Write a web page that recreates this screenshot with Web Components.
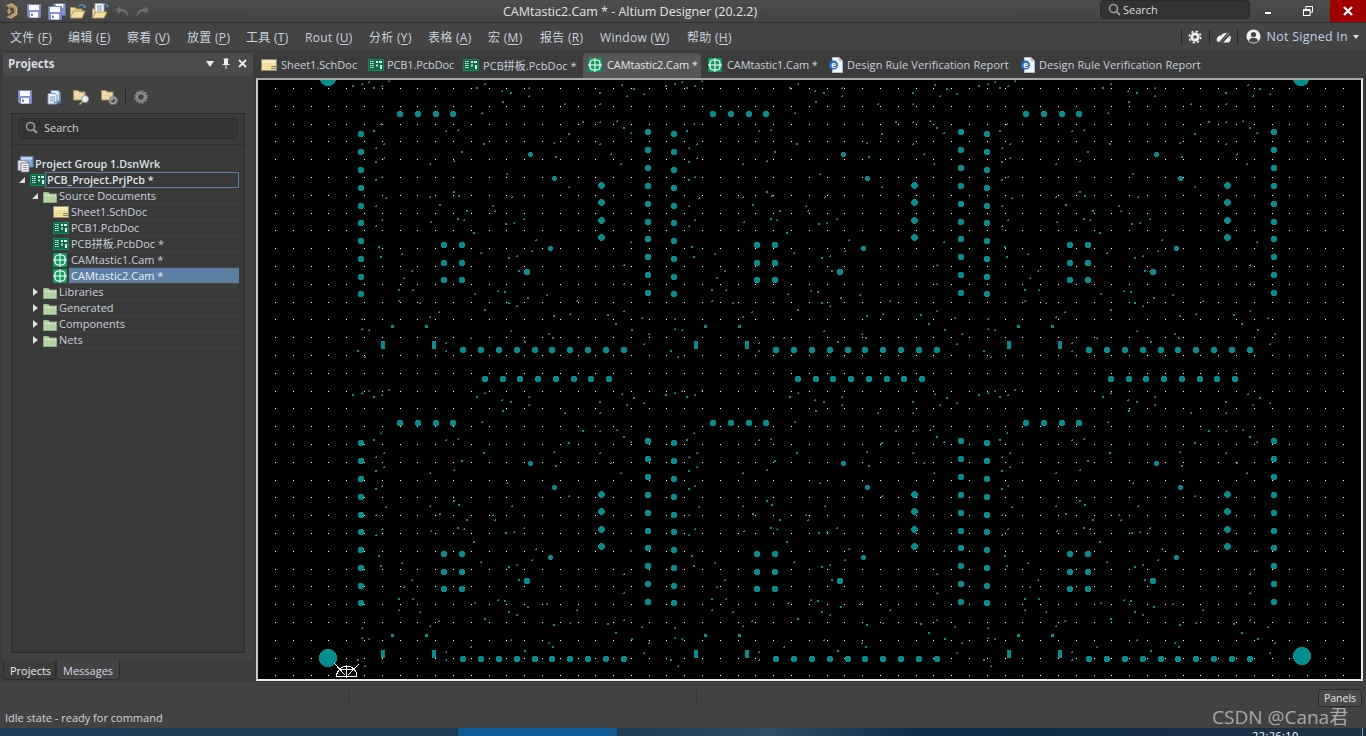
<!DOCTYPE html>
<html><head><meta charset="utf-8"><title>Altium Designer</title>
<style>
html,body{margin:0;padding:0;background:#424242;overflow:hidden}
body{font-family:"Open Sans","Noto Sans CJK SC",sans-serif;font-size:11px;color:#d8d8d8}
</style></head><body>
<ad-app>
  <ad-titlebar title-text="CAMtastic2.Cam * - Altium Designer (20.2.2)"></ad-titlebar>
  <ad-menubar>
    <ad-menu-item label="文件" key="F" w="58"></ad-menu-item>
    <ad-menu-item label="编辑" key="E" w="59"></ad-menu-item>
    <ad-menu-item label="察看" key="V" w="60"></ad-menu-item>
    <ad-menu-item label="放置" key="P" w="59"></ad-menu-item>
    <ad-menu-item label="工具" key="T" w="59"></ad-menu-item>
    <ad-menu-item label="Rout" key="U" w="64"></ad-menu-item>
    <ad-menu-item label="分析" key="Y" w="59"></ad-menu-item>
    <ad-menu-item label="表格" key="A" w="60"></ad-menu-item>
    <ad-menu-item label="宏" key="M" w="52"></ad-menu-item>
    <ad-menu-item label="报告" key="R" w="60"></ad-menu-item>
    <ad-menu-item label="Window" key="W" w="87"></ad-menu-item>
    <ad-menu-item label="帮助" key="H" w="60"></ad-menu-item>
  </ad-menubar>
  <ad-workspace>
    <ad-sidebar slot="side">
      <ad-tree-row pad="5" icon="group" bold>Project Group 1.DsnWrk</ad-tree-row>
      <ad-tree-row pad="5" arrow="open" icon="pcb" bold focus>PCB_Project.PrjPcb *</ad-tree-row>
      <ad-tree-row pad="18" arrow="open" icon="folder">Source Documents</ad-tree-row>
      <ad-tree-row pad="41" icon="sch">Sheet1.SchDoc</ad-tree-row>
      <ad-tree-row pad="41" icon="pcb">PCB1.PcbDoc</ad-tree-row>
      <ad-tree-row pad="41" icon="pcb">PCB拼板.PcbDoc *</ad-tree-row>
      <ad-tree-row pad="41" icon="cam">CAMtastic1.Cam *</ad-tree-row>
      <ad-tree-row pad="41" icon="cam" selected>CAMtastic2.Cam *</ad-tree-row>
      <ad-tree-row pad="18" arrow="closed" icon="folder">Libraries</ad-tree-row>
      <ad-tree-row pad="18" arrow="closed" icon="folder">Generated</ad-tree-row>
      <ad-tree-row pad="18" arrow="closed" icon="folder">Components</ad-tree-row>
      <ad-tree-row pad="18" arrow="closed" icon="folder">Nets</ad-tree-row>
    </ad-sidebar>
    <ad-document slot="doc">
      <ad-tab icon="sch" w="107" tx="16" ls="0">Sheet1.SchDoc</ad-tab>
      <ad-tab icon="pcb" w="95" tx="15" ls="-.1">PCB1.PcbDoc</ad-tab>
      <ad-tab icon="pcb" w="125" tx="16" ls=".05">PCB拼板.PcbDoc *</ad-tab>
      <ad-tab icon="cam" w="118" tx="15" ls="-.1" active>CAMtastic2.Cam *</ad-tab>
      <ad-tab icon="cam" w="120" tx="15" ls="-.1" style="margin-left:2px">CAMtastic1.Cam *</ad-tab>
      <ad-tab icon="report" w="192" tx="15" ls=".1">Design Rule Verification Report</ad-tab>
      <ad-tab icon="report" w="191" tx="15" ls=".1">Design Rule Verification Report</ad-tab>
    </ad-document>
  </ad-workspace>
  <ad-statusbar></ad-statusbar>
  <ad-taskbar></ad-taskbar>
  <ad-watermark>CSDN @Cana君</ad-watermark>
</ad-app>
<script>
const ICONS={
 logo:'<path d="M4 3 10 1 15.500 5 15.500 12.500 9 17 4 15 9 12.500 12 10.500 12 7 8.500 5 8 8 10 9.500 6.500 12.500 5 9 7 6Z" fill="#b39460"/><path d="M6 3.500 10 2.400 14.500 6 14.500 12 9 16" fill="none" stroke="#cfb07a" stroke-width="1"/>',
 save:'<path d="M.5.5H13.5V13.5H2L.5 12Z" fill="#8592cf" stroke="#7884c4"/><rect x="2" y="1" width="10" height="5" fill="#fbfbff"/><rect x="3" y="8" width="8" height="5.5" fill="#fff"/><rect x="4" y="9.5" width="2" height="2.5" fill="#7884c4"/>',
 saveall:'<g transform="translate(5 0) scale(.93)"><path d="M.5.5H13.5V13.5H.5Z" fill="#8592cf"/><rect x="3" y="1" width="8" height="4" fill="#fff"/></g><g transform="translate(0 3)"><path d="M.5.5H13.5V13.5H.5Z" fill="#8592cf" stroke="#6f7bbd"/><rect x="2" y="1" width="10" height="5" fill="#fff"/><rect x="3" y="8" width="8" height="5.5" fill="#fff"/><rect x="4" y="9.5" width="2" height="2.5" fill="#7884c4"/></g>',
 open:'<path d="M.5 15V4.5H5L6.5 6H12V8" fill="#eed8a0" stroke="#b59a5a"/><path d="M.5 15 3.5 8H15L12 15Z" fill="#f4dfa6" stroke="#b59a5a"/><path d="M9 3.5C10.5 1 13 1 14.5 3.5" fill="none" stroke="#5d8fc4" stroke-width="1.4"/><path d="M16 2 15.5 5.5 12.5 4Z" fill="#5d8fc4"/>',
 opendoc:'<path d="M.5 15V6H4V14" fill="#eed8a0" stroke="#b59a5a"/><path d="M3 .5H12V11H3Z" fill="#fff" stroke="#8c9fc4"/><path d="M5 3H10M5 5H10M5 7H10" stroke="#5f86bd"/><path d="M.5 15 3.5 9H15L12 15Z" fill="#f4dfa6" stroke="#b59a5a"/><path d="M11 1.5C12.5.5 14 1 15 2.5" fill="none" stroke="#5d8fc4" stroke-width="1.3"/><path d="M16.5 1.5 16 4.8 13.5 3.5Z" fill="#5d8fc4"/>',
 undo:'<path d="M5 2 1 6 5 10V7.5C9 7 12 9 13 13 14 8 11 4.500 5 4.500Z" fill="#6d6d6d"/>',
 redo:'<path d="M9 2 13 6 9 10V7.5C5 7 2 9 1 13 0 8 3 4.500 9 4.500Z" fill="#6d6d6d"/>',
 docs:'<path d="M5 .5H12L14 2.500V11H5Z" fill="#dfe9f6" stroke="#6f97c6"/><path d="M2 3.500H9L11 5.500V14H2Z" fill="#eef3fb" stroke="#6f97c6"/><path d="M4 7H9M4 9H9M4 11H9" stroke="#7a9cc8"/><path d="M14 3V12.500H8" fill="none" stroke="#5b8ac0" stroke-width="1.4"/>',
 foldersearch:'<path d="M.5 11V1.500H5L6.500 3H12V11Z" fill="#ecd9a4" stroke="#a8905a"/><circle cx="12" cy="10" r="3.500" fill="#e8eef5" stroke="#9a9a9a"/><path d="M9.300 12.700 6.500 15.500" stroke="#c7a860" stroke-width="1.600"/>',
 foldergear:'<path d="M.5 11V1.500H5L6.500 3H12V11Z" fill="#ecd9a4" stroke="#a8905a"/><circle cx="12" cy="11.500" r="3" fill="none" stroke="#9a9a9a" stroke-width="2"/><circle cx="12" cy="11.500" r="4.500" fill="none" stroke="#8a8a8a" stroke-width="1" stroke-dasharray="1.500 1.300"/>',
 gear:'<circle cx="7" cy="7" r="4" fill="none" stroke="#8a8a8a" stroke-width="2.600"/><circle cx="7" cy="7" r="6" fill="none" stroke="#8a8a8a" stroke-width="1.600" stroke-dasharray="2 1.140"/>',
 search:'<circle cx="5.500" cy="5.500" r="4" fill="none" stroke="#9a9a9a" stroke-width="1.600"/><path d="M8.500 8.500 12 12" stroke="#9a9a9a" stroke-width="2"/>',
 wgear:'<circle cx="7" cy="7" r="3.200" fill="none" stroke="#eee" stroke-width="2.800"/><circle cx="7" cy="7" r="5.700" fill="none" stroke="#eee" stroke-width="1.800" stroke-dasharray="2.200 2.270"/>',
 nocloud:'<path d="M1 11C0 8 2 5.500 5 5.500 7 2.500 11 2 13 3.500L5 12H2.500Z" fill="#eee"/><path d="M7 12.500 14 5.500C15 7 15 9.500 14 11.500L12.500 12.500Z" fill="#eee"/><path d="M13.500 1 3 13.500" stroke="#444" stroke-width="1.300"/>',
 user:'<circle cx="7.500" cy="7.500" r="7" fill="#eee"/><circle cx="7.500" cy="5.500" r="2.600" fill="#444"/><path d="M2.800 12C3.500 9.500 5.500 8.800 7.500 8.800S11.500 9.500 12.200 12C10 14.300 5 14.300 2.800 12Z" fill="#444"/>',
 sch:'<rect x=".5" y="1.500" width="15" height="11" fill="#f2de9c" stroke="#8d8d7a"/><rect x="1" y="2" width="14" height="3" fill="#f8eab8"/><path d="M10 8.500H15M10 10.500H15" stroke="#8d7f54"/>',
 pcb:'<rect x=".5" y="1.500" width="15" height="11" fill="#0a6b46" stroke="#16875b"/><path d="M2 3.500H6M2 5.500H6M2 7.500H6M2 9.500H6" stroke="#e7f3ee" stroke-dasharray="1.500 .6"/><rect x="8" y="3" width="2" height="2" fill="#e7f3ee"/><rect x="11" y="3" width="3" height="2" fill="#e7f3ee"/><rect x="8" y="6.500" width="2" height="2" fill="#cfe9de"/><rect x="12" y="7" width="2" height="4" fill="#e7f3ee"/>',
 cam:'<rect x="0" y="1" width="14" height="14" rx="1" fill="#0d9a5e"/><rect x="2" y="3" width="10" height="10" rx="3.500" fill="none" stroke="#fff" stroke-width="1.200"/><path d="M7 1V15M0 8H14" stroke="#fff" stroke-width="1"/>',
 report:'<path d="M4.500.5H11L14.500 4V15.500H4.500Z" fill="#f2f5fa" stroke="#b5bfd0"/><path d="M11 .5V4H14.500" fill="#cfd8e6" stroke="#b5bfd0"/><circle cx="5.500" cy="8" r="4.500" fill="#1f6fd0"/><text x="5.500" y="10.800" font-size="8" font-weight="700" font-family="Open Sans" text-anchor="middle" fill="#fff">e</text>',
 folder:'<path d="M.5 12.500V2.500H5.500L7 4H13.500V12.500Z" fill="#b4d3a3" stroke="#8faf80"/><rect x="1" y="5" width="12" height="1" fill="#d7e8cd"/>',
 group:'<path d="M3.500.5H16V11H3.500Z" fill="#7fa4d8" stroke="#5f86bd"/><rect x="4" y="1.500" width="11" height="2" fill="#cfdff5"/><path d="M1 4.500H9L10.500 6V14.500H1Z" fill="#e6e6ee" stroke="#8d8d9e"/><path d="M4 7H12V16H4Z" fill="#f5f5f8" stroke="#77778c"/><path d="M6 9.500H10M6 11.500H10M6 13.500H10" stroke="#8a8aa0"/>'
};
const VB={logo:[18,18],save:[14,14],saveall:[19,17],open:[17,16],opendoc:[17,16],undo:[14,14],redo:[14,14],docs:[15,15],foldersearch:[16,16],foldergear:[17,16],gear:[14,14],search:[13,13],wgear:[14,14],nocloud:[15,14],user:[15,15],sch:[16,14],pcb:[16,14],cam:[14,16],report:[15,16],folder:[14,13],group:[17,17]};
class AdIcon extends HTMLElement{connectedCallback(){
  const n=this.getAttribute('name'),[w,h]=VB[n];
  this.attachShadow({mode:'open'}).innerHTML=`<style>:host{display:inline-flex;flex:none;width:${w}px;height:${h}px}svg{display:block}</style><svg width="${w}" height="${h}" viewBox="0 0 ${w} ${h}">${ICONS[n]}</svg>`;
}}
customElements.define('ad-icon',AdIcon);

class AdApp extends HTMLElement{constructor(){super();this.attachShadow({mode:'open'}).innerHTML=`<style>:host{display:flex;flex-direction:column;width:1366px;height:736px;overflow:hidden;position:relative;font-family:"Open Sans","Noto Sans CJK SC",sans-serif;font-size:11px;color:#d8d8d8}</style><slot></slot>`}}
customElements.define('ad-app',AdApp);

class AdTitlebar extends HTMLElement{connectedCallback(){
  this.attachShadow({mode:'open'}).innerHTML=`<style>
  :host{display:flex;height:22px;flex:none;align-items:flex-start;background:linear-gradient(#4c4c4c,#444);border-bottom:1px solid #2e2e2e}
  .q{display:flex;align-items:center;height:22px;width:503px;flex:none;padding-left:2px;box-sizing:border-box}
  .t{font-size:12.5px;line-height:23px;color:#e2e2e2;white-space:nowrap;width:597px}
  .s{flex:none;height:19px;border:1px solid #2a2a2a;border-radius:4px;background:#333;display:flex;align-items:center;gap:2px;padding:0 0 1px 7px;box-sizing:border-box;color:#ddd;font-size:11px;width:150px}
  .wb{display:flex;margin-left:auto}
  .w{height:22px;display:flex;align-items:center;justify-content:center}
  svg{display:block}
  </style>
  <div class="q">
   <ad-icon name="logo" style="margin-right:7px"></ad-icon>
   <ad-icon name="save" style="margin-right:7px"></ad-icon>
   <ad-icon name="saveall" style="margin-right:3px"></ad-icon>
   <ad-icon name="open" style="margin-right:5px"></ad-icon>
   <ad-icon name="opendoc" style="margin-right:6px"></ad-icon>
   <ad-icon name="undo" style="margin-right:7px"></ad-icon>
   <ad-icon name="redo"></ad-icon>
  </div>
  <div class="t">${this.getAttribute('title-text')}</div>
  <div class="s"><ad-icon name="search"></ad-icon><span>Search</span></div>
  <div class="wb">
   <div class="w" style="width:36px"><svg width="8" height="8"><rect x="1" y="5" width="6" height="2" fill="#fff"/></svg></div>
   <div class="w" style="width:44px"><svg width="10" height="10"><rect x="3" y=".5" width="6.500" height="5.500" fill="none" stroke="#fff"/><rect x=".5" y="3.500" width="6.500" height="6" fill="#444" stroke="#fff"/><rect x="1" y="3" width="6" height="2" fill="#fff"/></svg></div>
   <div class="w" style="width:36px;background:#a00000"><svg width="10" height="10"><path d="M1 1 9 9M9 1 1 9" stroke="#fff" stroke-width="2.200"/></svg></div>
  </div>`;
}}
customElements.define('ad-titlebar',AdTitlebar);

class AdMenubar extends HTMLElement{connectedCallback(){
  this.attachShadow({mode:'open'}).innerHTML=`<style>
  :host{display:flex;height:27px;flex:none;align-items:center;background:#444;padding-left:10px;font-size:12px;color:#c9d3de}
  .r{margin-left:auto;display:flex;align-items:center;height:27px}
  .sep{width:1px;height:14px;background:#252525}
  .c{width:27px;display:flex;justify-content:center}
  .n{margin-left:6px;font-size:12.5px;color:#bcd0e6;letter-spacing:.25px}
  .car{width:0;height:0;border:3.5px solid transparent;border-top:4px solid #ddd;border-bottom:0;margin:0 7px 0 5px}
  </style><slot></slot><div class="r"><div class="sep"></div><div class="c"><ad-icon name="wgear"></ad-icon></div><div class="sep"></div><div class="c"><ad-icon name="nocloud"></ad-icon></div><div class="sep"></div>
  <ad-icon name="user" style="margin-left:8px"></ad-icon><span class="n">Not Signed In</span><i class="car"></i></div>`;
}}
customElements.define('ad-menubar',AdMenubar);

class AdMenuItem extends HTMLElement{connectedCallback(){
  const g=a=>this.getAttribute(a);
  this.attachShadow({mode:'open'}).innerHTML=`<style>:host{display:block;flex:none;white-space:nowrap;width:${g('w')}px;letter-spacing:.3px;padding-top:1px;box-sizing:border-box}u{text-underline-offset:2px}</style>${g('label')} (<u>${g('key')}</u>)`;
}}
customElements.define('ad-menu-item',AdMenuItem);

class AdWorkspace extends HTMLElement{constructor(){super();this.attachShadow({mode:'open'}).innerHTML=`<style>:host{display:flex;flex:none;height:632px;background:#3c3c3c}</style><slot name="side"></slot><slot name="doc"></slot>`}}
customElements.define('ad-workspace',AdWorkspace);

class AdSidebar extends HTMLElement{connectedCallback(){
  this.attachShadow({mode:'open'}).innerHTML=`<style>
  :host{display:flex;flex-direction:column;width:256px;flex:none;padding:3px 3px 0;box-sizing:border-box;background:#3c3c3c}
  .hd{height:23px;flex:none;box-sizing:border-box;padding:0 0 2px 5px;background:#4b4b4b;display:flex;align-items:center;font-weight:700;font-size:11.5px;color:#d7dde4}
  .hd b{font-weight:700;flex:1}
  .hd svg{display:block}
  .body{height:585px;flex:none;background:#424242;padding:0 8px;display:flex;flex-direction:column}
  .tb{height:37px;flex:none;box-sizing:border-box;padding:5px 0 0 7px;display:flex;align-items:center}
  .vs{width:1px;height:16px;background:#262626;margin:0 8px 0 7px}
  .frame{height:540px;flex:none;border:1px solid #2b2b2b;background:#3a3a3a;padding:4px 6px 0;box-sizing:border-box;display:flex;flex-direction:column}
  .sb{height:21px;flex:none;box-sizing:border-box;border:1px solid #2c2c2c;border-radius:4px;background:#333;display:flex;align-items:center;gap:6px;padding:0 0 2px 6px;color:#d4d4d4}
  .ln{height:1px;flex:none;background:#2f2f2f;margin:5px -6px 0}
  .tree{padding-top:11px;margin:0 -1px 0 -6px}
  .tabs{flex:1;display:flex;align-items:flex-start;background:#3c3c3c}
  .tab{height:19px;box-sizing:border-box;padding:0 6px;display:flex;align-items:center;border:1px solid #2d2d2d;border-top:0;border-radius:0 0 4px 4px;background:#444;color:#cfd8e2}
  .tab.a{background:#3c3c3c;color:#eee;width:53px}
  </style>
  <div class="hd"><b>Projects</b>
   <svg width="12" height="10" style="margin-right:4px"><path d="M1 2H9L5 8Z" fill="#eee"/></svg>
   <svg width="10" height="11" style="margin-right:7px"><path d="M2.500 1H7.500M3.500 1V6H6.500V1M1.500 6.500H8.500M5 6.500V11" stroke="#eee" fill="#eee"/></svg>
   <svg width="9" height="9" style="margin-right:6px"><path d="M1 1 8 8M8 1 1 8" stroke="#eee" stroke-width="1.800"/></svg>
  </div>
  <div class="body">
   <div class="tb"><ad-icon name="save" style="margin-right:14px"></ad-icon><ad-icon name="docs" style="margin-right:12px"></ad-icon><ad-icon name="foldersearch" style="margin-right:12px"></ad-icon><ad-icon name="foldergear"></ad-icon><div class="vs"></div><ad-icon name="gear"></ad-icon></div>
   <div class="frame"><div class="sb"><ad-icon name="search"></ad-icon><span>Search</span></div><div class="ln"></div><div class="tree"><slot></slot></div></div>
  </div>
  <div class="tabs"><div class="tab a">Projects</div><div class="tab">Messages</div></div>`;
}}
customElements.define('ad-sidebar',AdSidebar);

class AdTreeRow extends HTMLElement{connectedCallback(){
  const g=a=>this.getAttribute(a),h=a=>this.hasAttribute(a);
  const ar=g('arrow'),ic=g('icon');
  const arrow=ar=='open'?'<svg width="6" height="6" style="display:block"><path d="M6 0V6H0Z" fill="#ddd"/></svg>':ar=='closed'?'<svg width="5" height="8" style="display:block"><path d="M0 0 5 4 0 8Z" fill="#ddd"/></svg>':'';
  const ml=(ic=='folder'||h('focus'))?1:2, pl=(ic=='folder'||h('focus'))?1:2;
  this.attachShadow({mode:'open'}).innerHTML=`<style>
  :host{display:flex;height:16px;align-items:center;padding-left:${g('pad')}px;white-space:nowrap}
  .a{width:${ar?10:0}px;flex:none;display:flex;justify-content:center;margin-right:${ar?3:0}px}
  .i{width:14px;flex:none;display:flex}
  .l{flex:1;height:16px;line-height:15px;box-sizing:border-box;padding-left:${pl}px;min-width:0;
     border-bottom:${h('bold')?'0':'1px solid #444'};margin-left:${ml}px;color:${h('selected')?'#e8eef5':'#c8d0d8'};
     ${h('selected')?'background:#5d7fa3;':''}${h('bold')?'font-weight:600;color:#dde2e8;font-size:10.8px;':''}${h('focus')?'border:1px solid #5d7fa3;line-height:14px;padding-left:1px;':''}}
  </style><span class="a">${arrow}</span><span class="i"><ad-icon name="${ic}"></ad-icon></span><span class="l"><slot></slot></span>`;
}}
customElements.define('ad-tree-row',AdTreeRow);

class AdDocument extends HTMLElement{connectedCallback(){
  this.attachShadow({mode:'open'}).innerHTML=`<style>
  :host{display:flex;flex-direction:column;flex:1;min-width:0;padding-top:3px}
  .tabs{display:flex;height:25px;flex:none}
  </style><div class="tabs"><slot></slot></div><pcb-canvas></pcb-canvas>`;
}}
customElements.define('ad-document',AdDocument);

class AdTab extends HTMLElement{connectedCallback(){
  const a=this.hasAttribute('active'),g=n=>this.getAttribute(n);
  this.attachShadow({mode:'open'}).innerHTML=`<style>
  :host{display:flex;align-items:center;height:25px;flex:none;width:${g('w')}px;white-space:nowrap;padding:0 0 2px 5px;box-sizing:border-box;
   color:${a?'#e6e6e6':'#c8d2dd'};${a?'background:#565656;border-radius:4px 4px 0 0;':''}}
  .i{width:${g('tx')}px;flex:none;display:flex;margin-right:4px}
  span.t{letter-spacing:${g('ls')}px}
  </style><span class="i"><ad-icon name="${g('icon')}"></ad-icon></span><span class="t"><slot></slot></span>`;
}}
customElements.define('ad-tab',AdTab);

class PcbCanvas extends HTMLElement{connectedCallback(){
  const TEAL='#008f8f';
  let dots='',pads='',sq='';
  for(let r=0;r<34;r++)for(let c=0;c<61;c++){
    const x=Math.round(275+c*17.795),y=Math.round(88+r*17.8);
    if(x<1361&&y<679)dots+=`M${x} ${y}h1v1h-1z`;
  }
  const rect=(x,y,w,h)=>{sq+=`M${x} ${y}h${w}v${h}h${-w}z`};
  // pads are aliased pixel discs of diameter d, rasterised row by row
  const disc=(cx,cy,d)=>{
    const L=Math.round(cx-d/2),T=Math.round(cy-d/2),r2=(d/2+.1)*(d/2+.1);
    for(let j=0;j<d;j++){
      const dy=j+.5-d/2;let i=0;
      while(i<d/2&&(i+.5-d/2)**2+dy*dy>r2)i++;
      if(d-2*i>0)rect(L+i,T+j,d-2*i,1);
    }
  };
  const specks=[[39,17],[66,12],[87,5],[101,24],[125,18],[148,2],[410,24],[434,12],[486,32],[514,38],[566,24],[566,47],[489,66],[675,72],[845,15],[882,27],[912,42],[860,48],[780,40],[780,72],[426,99],[729,126],[780,126],[830,123],[852,144],[872,158],[124,133],[102,153],[318,153],[354,150],[687,162],[132,192],[108,204],[432,192],[642,189],[780,192],[366,216],[813,222],[132,234],[108,246],[342,242],[270,252],[648,231],[843,252],[126,291],[108,300],[502,281],[687,321],[342,336],[138,354],[270,351],[357,348],[516,351],[108,378],[300,375],[459,378],[465,393],[381,393],[126,420],[108,438],[354,418],[372,420],[273,427],[498,433],[523,429],[552,417],[402,459],[588,480],[873,486],[117,501],[186,522],[423,519],[507,534],[531,528],[577,514],[123,531],[852,555],[216,573],[537,573],[192,594],[852,612],[177,630],[219,630],[474,633],[495,636],[621,645],[406,642],[564,654],[177,662],[240,669],[507,669],[531,678],[712,663],[435,690],[297,696],[690,702],[642,708],[853,694],[271,711],[803,705],[906,714],[66,717],[828,732],[66,747],[87,750],[877,750],[513,754],[627,762],[639,774],[927,762],[393,774],[555,787],[319,788],[912,792],[54,813],[319,814],[74,831]];
  for(let ty=0;ty<2;ty++)for(let tx=0;tx<3;tx++){
    const X=tx*313,Y=ty*309;
    [400,418,436,453].forEach(x=>disc(x+X,114+Y,6));
    [134,152,170,188,205.500,223,241,259,277,294].forEach(y=>disc(361+X,y+Y,6));
    [132,150,168,186,204,222,239,257,275,293].forEach(y=>disc(647.500+X,y+Y,6));
    [185,202.500,220,237.500].forEach(y=>disc(601+X,y+Y,7));
    [244.500,262.500,280].forEach(y=>{disc(444+X,y+Y,6);disc(461.500+X,y+Y,6)});
    [463,481,499,517,534.500,552,570,588,606,624].forEach(x=>disc(x+X,349.500+Y,6));
    [484.500,502.500,520,538,556,574,591,609].forEach(x=>disc(x+X,378.500+Y,6));
    disc(530.500+X,154.500+Y,5);disc(554.300+X,178+Y,5);disc(550.700+X,248.700+Y,5);disc(527+X,272.300+Y,6);
    rect(381+X,341+Y,4,8);rect(432+X,341+Y,4,8);
    rect(391+X,325+Y,3,3);rect(425+X,325+Y,3,3);
    specks.forEach(([a,b],i)=>{
      const x=Math.round(340+a/3)+X,y=Math.round(80+b/3)+Y;
      if(i%3==0)rect(x-1,y-1,2,2);else rect(x-1,y,2,1),rect(x,y-1,1,1);
    });
  }
  disc(328,78,16);disc(1301,78,16);disc(328,658,18);disc(1302,656,18);
  this.attachShadow({mode:'open'}).innerHTML=`<style>
  :host{display:block;flex:none;width:1107px;height:603px;box-sizing:border-box;border:2px solid #ececec;border-top-color:#a8a8a8;border-left-color:#c8c8c8;background:#000;overflow:hidden}
  svg{display:block}
  </style><svg width="1103" height="599" viewBox="258 80 1103 599" shape-rendering="crispEdges">
   <path d="${dots}" fill="#fff"/><path d="${sq}" fill="${TEAL}"/>
   <g fill="none" stroke="#fff" stroke-width="1"><path d="M336.500 676.500A10 10 0 0 1 357 676.500M346.500 665V678M339 669.500H354M334.500 663.500 345 675M358.500 664.500 348 675M336 676.500H357"/></g>
  </svg>`;
}}
customElements.define('pcb-canvas',PcbCanvas);

class AdStatusbar extends HTMLElement{connectedCallback(){
  this.attachShadow({mode:'open'}).innerHTML=`<style>
  :host{display:flex;flex-direction:column;height:46px;flex:none;background:#424242;box-sizing:border-box;padding:7px 4px 0 5px}
  .top{display:flex;height:17px;flex:none}
  .sep{width:1px;height:17px;background:#343434}
  .p{margin-left:auto;width:44px;height:18px;box-sizing:border-box;border:1px solid #292929;border-radius:4px;background:#4a4a4a;color:#e4e4e4;display:flex;align-items:center;justify-content:center;font-size:10.500px}
  .m{color:#d4d4d4;line-height:15px;margin-top:4px}
  </style><div class="top"><div class="sep" style="margin-left:343px"></div><div class="sep" style="margin-left:347px"></div><div class="p">Panels</div></div><div class="m">Idle state - ready for command</div>`;
}}
customElements.define('ad-statusbar',AdStatusbar);

class AdTaskbar extends HTMLElement{connectedCallback(){
  this.attachShadow({mode:'open'}).innerHTML=`<style>
  :host{display:block;height:8px;flex:none;overflow:hidden;position:relative;
   background:linear-gradient(90deg,#1f3b55 0,#1c3a52 458px,#0f5b96 458px,#0f5b96 617px,#1d3a52 617px,#2e4c64 770px,#0e2a45 925px,#1c3247 1362px,#8a97a3 1362px,#8a97a3 1363px,#1c3247 1363px)}
  span{position:absolute;left:1252px;top:1px;color:#fff;font-size:11px;line-height:14px;white-space:nowrap;letter-spacing:.4px}
  </style><span>22:26:10</span>`;
}}
customElements.define('ad-taskbar',AdTaskbar);

class AdWatermark extends HTMLElement{constructor(){super();this.attachShadow({mode:'open'}).innerHTML=`<style>:host{position:absolute;left:1212px;top:704px;font-size:19px;line-height:26px;color:#a8a8a8;white-space:nowrap}</style><slot></slot>`}}
customElements.define('ad-watermark',AdWatermark);
</script>
</body></html>
